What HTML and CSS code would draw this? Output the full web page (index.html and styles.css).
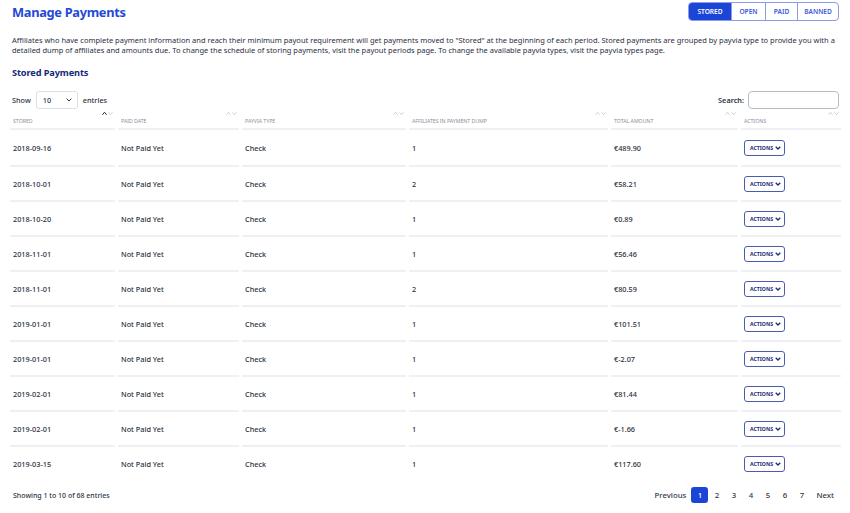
FILE: index.html
```html
<!DOCTYPE html>
<html>
<head>
<meta charset="utf-8">
<link rel="stylesheet" href="styles.css">
</head>
<body>
<div class="page">
  <header class="topbar">
    <h1 class="title">Manage Payments</h1>
    <nav class="tabs">
      <a class="tab tab-active">STORED</a>
      <a class="tab">OPEN</a>
      <a class="tab">PAID</a>
      <a class="tab">BANNED</a>
    </nav>
  </header>
  <p class="intro">Affiliates who have complete payment information and reach their minimum payout requirement will get payments moved to "Stored" at the beginning of each period. Stored payments are grouped by payvia type to provide you with a detailed dump of affiliates and amounts due. To change the schedule of storing payments, visit the payout periods page. To change the available payvia types, visit the payvia types page.</p>
  <h2 class="subtitle">Stored Payments</h2>
  <div class="controls">
    <label class="length">Show
      <span class="select"><span>10</span>
        <svg width="6" height="4" viewBox="0 0 6 4"><path d="M0.6 0.6 L3 3 L5.4 0.6" fill="none" stroke="#333" stroke-width="1"/></svg>
      </span>
      entries</label>
    <label class="search">Search: <span class="search-input"></span></label>
  </div>
  <table class="grid">
    <colgroup>
      <col class="c1"><col class="c2"><col class="c3"><col class="c4"><col class="c5"><col class="c6">
    </colgroup>
    <thead>
      <tr>
        <th><div class="th-in"><span class="sort on-up"><svg width="11" height="5" viewBox="0 0 11 5"><path class="up" d="M0.5 3.8 L2.5 1.2 L4.5 3.8"/><path class="dn" d="M6.5 1.2 L8.5 3.8 L10.5 1.2"/></svg></span><span class="lbl">Stored</span></div></th>
        <th><div class="th-in"><span class="sort"><svg width="11" height="5" viewBox="0 0 11 5"><path class="up" d="M0.5 3.8 L2.5 1.2 L4.5 3.8"/><path class="dn" d="M6.5 1.2 L8.5 3.8 L10.5 1.2"/></svg></span><span class="lbl">Paid Date</span></div></th>
        <th><div class="th-in"><span class="sort"><svg width="11" height="5" viewBox="0 0 11 5"><path class="up" d="M0.5 3.8 L2.5 1.2 L4.5 3.8"/><path class="dn" d="M6.5 1.2 L8.5 3.8 L10.5 1.2"/></svg></span><span class="lbl">Payvia Type</span></div></th>
        <th><div class="th-in"><span class="sort"><svg width="11" height="5" viewBox="0 0 11 5"><path class="up" d="M0.5 3.8 L2.5 1.2 L4.5 3.8"/><path class="dn" d="M6.5 1.2 L8.5 3.8 L10.5 1.2"/></svg></span><span class="lbl">Affiliates in Payment Dump</span></div></th>
        <th><div class="th-in"><span class="sort"><svg width="11" height="5" viewBox="0 0 11 5"><path class="up" d="M0.5 3.8 L2.5 1.2 L4.5 3.8"/><path class="dn" d="M6.5 1.2 L8.5 3.8 L10.5 1.2"/></svg></span><span class="lbl">Total Amount</span></div></th>
        <th><div class="th-in"><span class="sort"><svg width="11" height="5" viewBox="0 0 11 5"><path class="up" d="M0.5 3.8 L2.5 1.2 L4.5 3.8"/><path class="dn" d="M6.5 1.2 L8.5 3.8 L10.5 1.2"/></svg></span><span class="lbl">Actions</span></div></th>
      </tr>
    </thead>
    <tbody id="rows"></tbody>
  </table>
  <footer class="foot">
    <div class="info">Showing 1 to 10 of 68 entries</div>
    <div class="pager">
      <a class="pg-link pg-prev">Previous</a>
      <a class="pg-num pg-active">1</a>
      <a class="pg-num">2</a>
      <a class="pg-num">3</a>
      <a class="pg-num">4</a>
      <a class="pg-num">5</a>
      <a class="pg-num">6</a>
      <a class="pg-num">7</a>
      <a class="pg-link pg-next">Next</a>
    </div>
  </footer>
</div>
<script>
  var data = [
    ["2018-09-16","1","€489.90"],
    ["2018-10-01","2","€58.21"],
    ["2018-10-20","1","€0.89"],
    ["2018-11-01","1","€56.46"],
    ["2018-11-01","2","€80.59"],
    ["2019-01-01","1","€101.51"],
    ["2019-01-01","1","€-2.07"],
    ["2019-02-01","1","€81.44"],
    ["2019-02-01","1","€-1.66"],
    ["2019-03-15","1","€117.60"]
  ];
  var html = "";
  data.forEach(function (r) {
    html += '<tr><td>' + r[0] + '</td><td>Not Paid Yet</td><td>Check</td><td>' + r[1] + '</td><td>' + r[2] +
      '</td><td><button class="act">ACTIONS <svg width="6" height="4" viewBox="0 0 6 4"><path d="M0.7 0.7 L3 3 L5.3 0.7" fill="none" stroke="#1e2c78" stroke-width="1.3"/></svg></button></td></tr>';
  });
  document.getElementById("rows").innerHTML = html;
</script>
</body>
</html>
```

FILE: styles.css
```css
* { box-sizing: border-box; }
html, body { margin: 0; padding: 0; background: #fff; }
body {
  font-family: "Noto Sans", "Open Sans", sans-serif;
  color: #2e3342;
  font-size: 7.3px;
  font-weight: 500;
}
.page { padding: 2px 11px 0 12px; }

.topbar { display: flex; justify-content: space-between; align-items: flex-start; }
.title {
  margin: 0;
  font-size: 12.8px;
  letter-spacing: -0.3px;
  font-weight: 700;
  color: #1f4ad6;
  line-height: 20px;
}
.tabs {
  display: flex;
  border: 1px solid #8a9ce6;
  border-radius: 4px;
  overflow: hidden;
  height: 19px;
}
.tab {
  display: flex;
  align-items: center;
  justify-content: center;
  font-size: 6.6px;
  font-weight: 600;
  color: #3b5bd8;
  border-left: 1px solid #8a9ce6;
}
.tab:first-child { border-left: none; }
.tab-active { background: #1a45d6; color: #fff; width: 42px; }
.tabs .tab:nth-child(2) { width: 34px; }
.tabs .tab:nth-child(3) { width: 32px; }
.tabs .tab:nth-child(4) { width: 41px; }

.intro {
  margin: 13px 0 0 0;
  font-size: 7.5px;
  font-weight: 400;
  line-height: 10px;
  color: #2a2f40;
}
.subtitle {
  margin: 12px 0 0 0;
  font-size: 9.2px;
  letter-spacing: -0.1px;
  font-weight: 700;
  color: #13287a;
  line-height: 12px;
}

.controls {
  display: flex;
  justify-content: space-between;
  align-items: center;
  margin-top: 12px;
}
.length, .search { display: flex; align-items: center; gap: 5px; color: #2e3342; }
.select {
  display: flex;
  align-items: center;
  justify-content: space-between;
  width: 42px;
  height: 18px;
  border: 1px solid #dcdfe5;
  border-radius: 3px;
  padding: 0 5px 0 6px;
}
.search { gap: 4px; font-weight: 600; }
.search-input {
  width: 91px;
  height: 18px;
  border: 1px solid #b8bcc6;
  border-radius: 4px;
}

.grid {
  margin: 2px 0 0 -5px;
  width: 834px;
  table-layout: fixed;
  border-collapse: separate;
  border-spacing: 3px 0;
}
.c1 { width: 105px; }
.c2 { width: 121px; }
.c3 { width: 164px; }
.c4 { width: 199px; }
.c5 { width: 127px; }
.c6 { width: 100px; }

th { padding: 0 3px; text-align: left; font-weight: 400; border-bottom: 2px solid #eef0f4; }
.th-in { display: flex; flex-direction: column; height: 17px; }
.sort { align-self: flex-end; display: flex; height: 6px; margin-right: -1px; }
.sort svg path { fill: none; stroke: #c6c9d1; stroke-width: 0.8; }
.sort.on-up svg path.up { stroke: #333; stroke-width: 1; }
.lbl { text-transform: uppercase; font-size: 5.2px; color: #8a8e99; line-height: 8px; }

td {
  padding: 0 3px;
  height: 35px;
  border-top: 2px solid #eef0f4;
  color: #2b303d;
  vertical-align: middle;
}
tbody tr:first-child td { border-top: none; }
.act {
  display: flex;
  align-items: center;
  gap: 2px;
  width: 41px;
  height: 16px;
  padding: 0 0 0 5px;
  border: 1px solid #4a5cae;
  border-radius: 3px;
  background: #fff;
  font-family: "Noto Sans", "Open Sans", sans-serif;
  font-size: 5.2px;
  font-weight: 700;
  color: #1e2c78;
}

.foot {
  display: flex;
  justify-content: space-between;
  align-items: center;
  margin-top: 7px;
  padding-left: 1px;
}
.info { font-size: 7px; color: #2e3342; }
.pager { display: flex; align-items: center; font-size: 7.8px; color: #333a48; margin-right: 5px; }
.pg-prev { margin-right: 5px; }
.pg-next { margin-left: 6px; }
.pg-num {
  display: flex;
  align-items: center;
  justify-content: center;
  width: 17px;
  height: 16px;
  border-radius: 3px;
}
.pg-active { background: #1a45d6; color: #fff; }
```
